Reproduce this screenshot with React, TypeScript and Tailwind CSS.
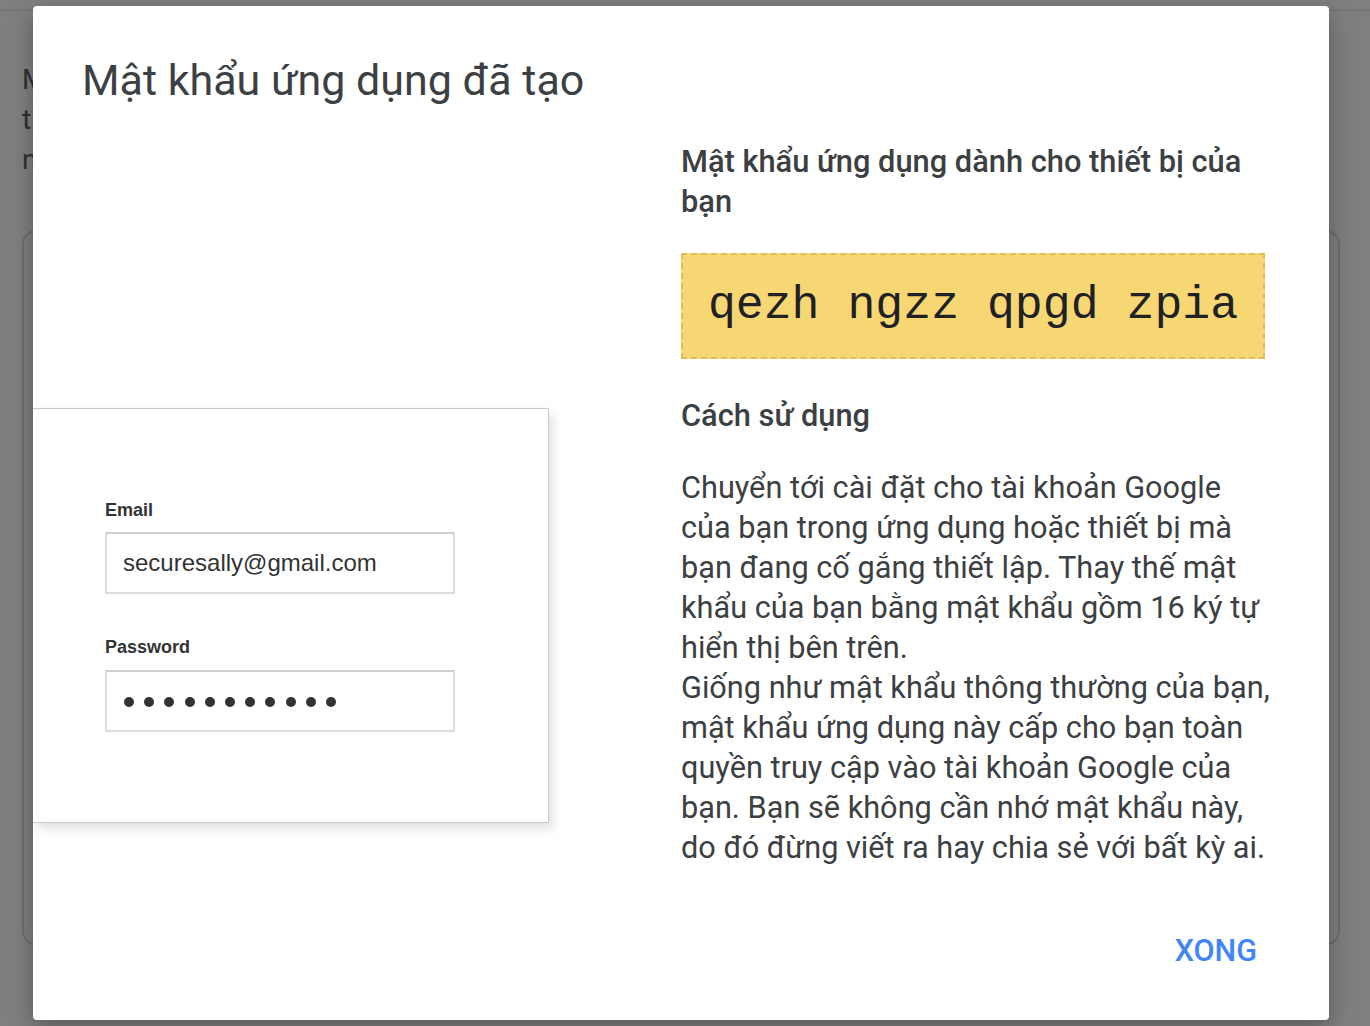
import React from "react";

const roboto = { fontFamily: "Roboto, 'Noto Sans', sans-serif" };

const paragraphOne = [
  "Chuyển tới cài đặt cho tài khoản Google",
  "của bạn trong ứng dụng hoặc thiết bị mà",
  "bạn đang cố gắng thiết lập. Thay thế mật",
  "khẩu của bạn bằng mật khẩu gồm 16 ký tự",
  "hiển thị bên trên.",
];

const paragraphTwo = [
  "Giống như mật khẩu thông thường của bạn,",
  "mật khẩu ứng dụng này cấp cho bạn toàn",
  "quyền truy cập vào tài khoản Google của",
  "bạn. Bạn sẽ không cần nhớ mật khẩu này,",
  "do đó đừng viết ra hay chia sẻ với bất kỳ ai.",
];

const LoginCard = () => {
  return (
    <div
      className="w-[516px] bg-white border border-l-0 border-[#c9c9c9] shadow-[4px_6px_10px_rgba(0,0,0,0.12)] pt-[91px] pb-[90px] pl-[72px] font-['Liberation_Sans',Arial,sans-serif]"
    >
      <div className="text-[18px] leading-[20px] font-bold text-[#333]">Email</div>
      <div className="mt-[12px] w-[350px] h-[62px] border-2 border-[#dddddd] border-t-[#cfcfcf] flex items-center pl-[16px] text-[24px] text-[#333]">
        securesally@gmail.com
      </div>
      <div className="mt-[43px] text-[18px] leading-[20px] font-bold text-[#333]">
        Password
      </div>
      <div className="mt-[13px] w-[350px] h-[62px] border-2 border-[#dddddd] border-t-[#cfcfcf] flex items-center gap-[10.2px] pl-[17px] pt-[2px]">
        {Array.from({ length: 11 }, (_, i) => (
          <span key={i} className="w-[10px] h-[10px] rounded-full bg-[#333]" />
        ))}
      </div>
    </div>
  );
};

export default function App() {
  return (
    <div className="relative w-[1370px] h-[1026px] overflow-hidden bg-white" style={roboto}>
      {/* page behind the dialog */}
      <div className="h-[11px] border-b-2 border-[#ececec]" />
      <div className="px-[22px] pt-[49px] text-[28px] leading-[40px] text-[#5f6368] whitespace-nowrap">
        <p>Mật khẩu ứng dụng cho phép bạn đăng nhập vào Tài khoản Google</p>
        <p>thiết bị không hỗ trợ Xác minh 2 bước. Bạn chỉ cần</p>
        <p>nhập mật khẩu này một lần.</p>
      </div>
      <div className="mx-[22px] mt-[50px] w-[1318px] h-[715px] border-2 border-[#dadce0] rounded-[14px]" />

      {/* scrim */}
      <div className="absolute inset-0 bg-black/50" />

      {/* dialog */}
      <div className="absolute left-[33px] top-[6px] w-[1296px] h-[1014px] bg-white rounded-[4px] shadow-[0_8px_24px_rgba(0,0,0,0.3)] flex overflow-hidden">
        <div className="w-[648px] flex flex-col">
          <h1 className="pl-[49px] pt-[49px] text-[43px] leading-[50px] text-[#3c4043] whitespace-nowrap">
            Mật khẩu ứng dụng đã tạo
          </h1>
          <div className="mt-[303px]">
            <LoginCard />
          </div>
        </div>

        <div className="flex-1 flex flex-col pt-[136px] pr-[48px] text-[#3c4043]">
          <h2 className="w-[590px] text-[30.8px] leading-[40px] font-medium">
            Mật khẩu ứng dụng dành cho thiết bị của bạn
          </h2>
          <div className="mt-[31px] w-[584px] h-[106px] bg-[#f7d774] border-2 border-dashed border-[#dcbf5e] flex items-center justify-center">
            <span className="text-[46.5px] leading-none text-[#202124] font-['Liberation_Mono','Courier_New',monospace] whitespace-nowrap">
              qezh ngzz qpgd zpia
            </span>
          </div>
          <h3 className="mt-[37px] text-[30.8px] leading-[40px] font-medium">Cách sử dụng</h3>
          <div className="mt-[32px] text-[30.7px] leading-[40px] whitespace-nowrap">
            {paragraphOne.map((line) => (
              <div key={line}>{line}</div>
            ))}
            {paragraphTwo.map((line) => (
              <div key={line}>{line}</div>
            ))}
          </div>
          <div className="mt-[63px] flex justify-end">
            <button className="mr-[8px] px-[16px] text-[30.5px] leading-[40px] font-medium text-[#4285f4]">
              XONG
            </button>
          </div>
        </div>
      </div>
    </div>
  );
}
